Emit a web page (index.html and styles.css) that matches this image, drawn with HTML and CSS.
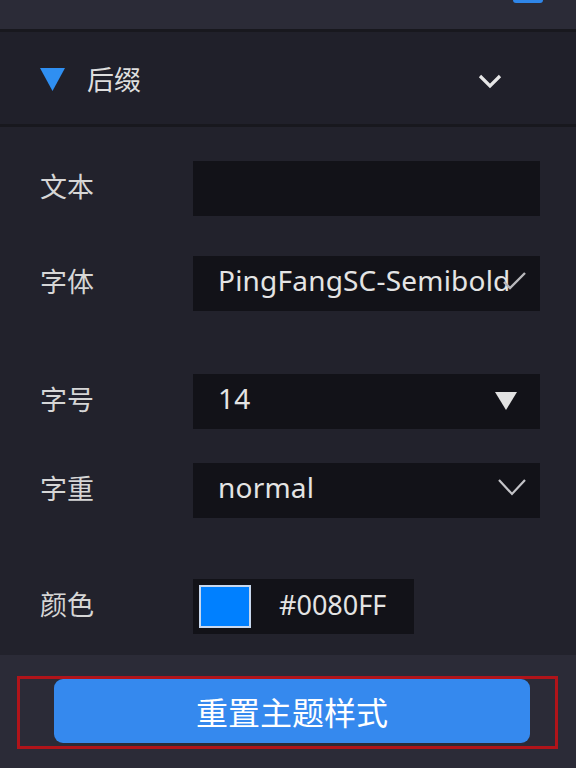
FILE: index.html
```html
<!DOCTYPE html>
<html lang="zh">
<head>
<meta charset="utf-8">
<link rel="stylesheet" href="styles.css">
</head>
<body>
<div class="panel">
  <div class="topbar"><span class="top-mark"></span></div>
  <div class="header">
    <svg class="tri" width="25" height="23" viewBox="0 0 25 23"><polygon points="0,0 25,0 12.5,23" fill="#2f8ff2"/></svg>
    <span class="title">后缀</span>
    <svg class="chev" width="24" height="15" viewBox="0 0 24 15"><polyline points="2,2 12,12 22,2" fill="none" stroke="#e6e6e6" stroke-width="3.2"/></svg>
  </div>
  <div class="form">
    <div class="row r1">
      <span class="label">文本</span>
      <div class="control"></div>
    </div>
    <div class="row r2">
      <span class="label">字体</span>
      <div class="control sel">
        <span class="val">PingFangSC-Semibold</span>
        <svg class="ico check" width="26" height="20" viewBox="0 0 26 20"><polyline points="3,12 9,18 24,3" fill="none" stroke="#b8b8bc" stroke-width="2.4"/></svg>
      </div>
    </div>
    <div class="row r3">
      <span class="label">字号</span>
      <div class="control sel">
        <span class="val">14</span>
        <svg class="ico tri-w" width="24" height="19" viewBox="0 0 24 19"><polygon points="1,1 23,1 12,19" fill="#e2e2e2"/></svg>
      </div>
    </div>
    <div class="row r4">
      <span class="label">字重</span>
      <div class="control sel">
        <span class="val">normal</span>
        <svg class="ico chev-g" width="30" height="18" viewBox="0 0 30 18"><polyline points="2,2 15,16 28,2" fill="none" stroke="#c4c4c8" stroke-width="2.2"/></svg>
      </div>
    </div>
    <div class="row r5">
      <span class="label">颜色</span>
      <div class="color-box">
        <span class="swatch"></span>
        <span class="hex">#0080FF</span>
      </div>
    </div>
  </div>
  <div class="footer">
    <div class="outline">
      <button class="reset">重置主题样式</button>
    </div>
  </div>
</div>
</body>
</html>
```

FILE: styles.css
```css
html, body {
  margin: 0;
  padding: 0;
  background: #2b2b37;
}
body {
  font-family: "Noto Sans", "Noto Sans CJK SC", sans-serif;
  color: #dcdcdc;
}
.panel {
  width: 576px;
  height: 768px;
  display: flex;
  flex-direction: column;
  overflow: hidden;
}
.topbar {
  height: 29px;
  background: #2b2b37;
  border-bottom: 3px solid #18181e;
  display: flex;
  justify-content: flex-end;
  align-items: flex-start;
}
.top-mark {
  width: 30px;
  height: 3px;
  background: #2f86e8;
  border-radius: 0 0 3px 3px;
  margin-right: 33px;
}
.header {
  height: 92px;
  background: #20202a;
  border-bottom: 3px solid #18181e;
  display: flex;
  align-items: center;
  padding-left: 40px;
  padding-right: 74px;
}
.tri {
  margin-top: 2px;
}
.title {
  font-family: "Noto Sans CJK SC", sans-serif;
  font-size: 27px;
  margin-left: 22px;
  color: #dedede;
  flex: 1;
}
.chev {
  margin-top: 6px;
}
.form {
  background: #22222c;
  padding: 0 0 21px 40px;
}
.row {
  display: flex;
  align-items: center;
}
.r1 { margin-top: 34px; }
.r2 { margin-top: 40px; }
.r3 { margin-top: 63px; }
.r4 { margin-top: 34px; }
.r5 { margin-top: 61px; }
.label {
  width: 153px;
  font-family: "Noto Sans CJK SC", sans-serif;
  font-size: 27px;
  color: #d6d6d6;
  line-height: 1;
  margin-top: -6px;
}
.control {
  width: 347px;
  height: 55px;
  background: #121218;
  position: relative;
  box-sizing: border-box;
  display: flex;
  align-items: center;
  padding-left: 25px;
}
.val {
  font-size: 28px;
  letter-spacing: 0.2px;
  color: #e4e4e4;
  white-space: nowrap;
  line-height: 1;
  margin-top: -7px;
}
.ico {
  position: absolute;
}
.check {
  right: 13px;
  top: 14px;
}
.tri-w {
  right: 22px;
  top: 17px;
}
.chev-g {
  right: 13px;
  top: 15px;
}
.color-box {
  width: 221px;
  height: 55px;
  background: #121218;
  display: flex;
  align-items: center;
  padding-left: 6px;
  box-sizing: border-box;
}
.swatch {
  width: 48px;
  height: 39px;
  background: #0080ff;
  border: 2px solid #c8d8ee;
}
.hex {
  font-size: 27px;
  color: #e4e4e4;
  margin-left: 28px;
  line-height: 1;
  margin-top: -4px;
}
.footer {
  flex: 1;
  background: #2b2b37;
  padding-top: 21px;
}
.outline {
  margin-left: 17px;
  width: 541px;
  height: 73px;
  box-sizing: border-box;
  border: 3px solid #b0141a;
  padding: 0 25px 3px 34px;
}
.reset {
  display: block;
  width: 476px;
  height: 64px;
  border: none;
  border-radius: 9px;
  background: #3589ee;
  color: #ffffff;
  font-family: "Noto Sans CJK SC", sans-serif;
  font-size: 32px;
  padding: 0;
  cursor: pointer;
}
```
